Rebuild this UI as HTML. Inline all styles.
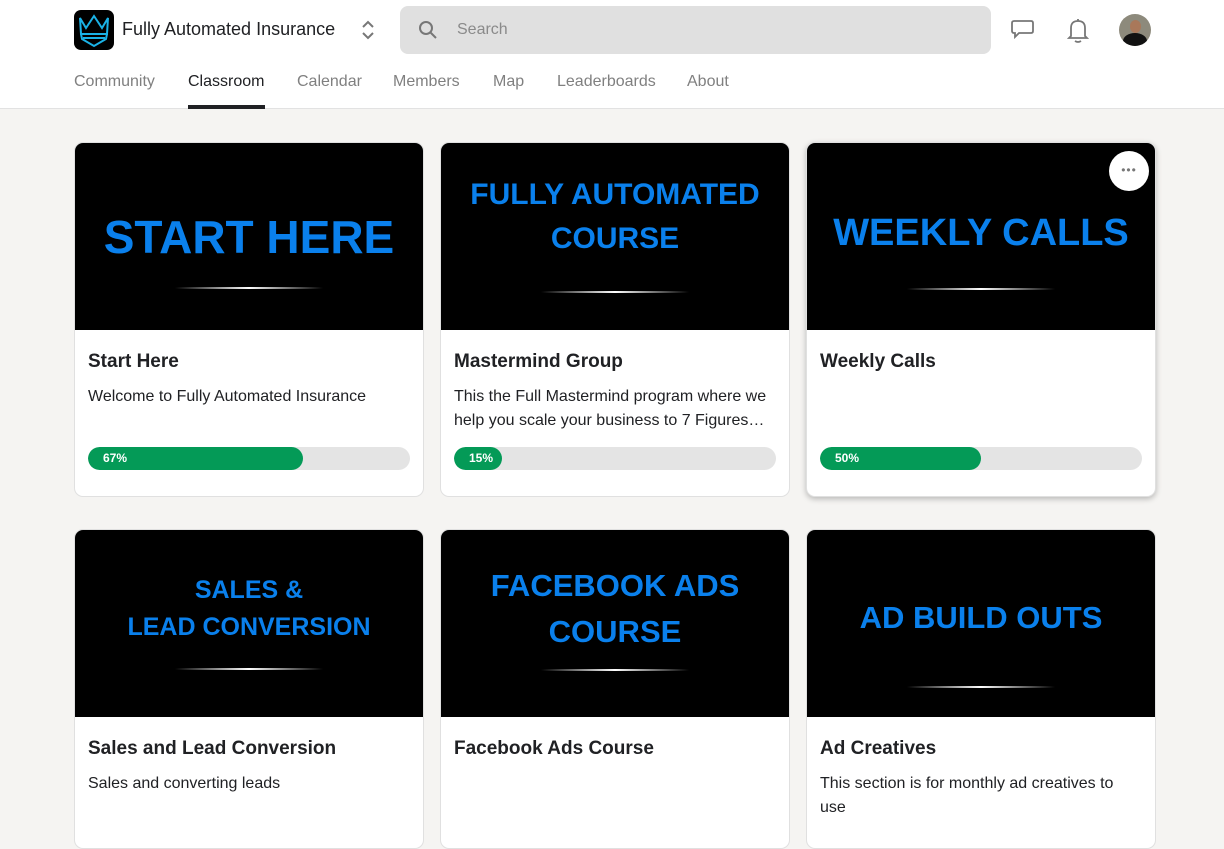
<!DOCTYPE html>
<html><head><meta charset="utf-8"><style>
*{box-sizing:border-box;margin:0;padding:0}
body{width:1224px;height:833px;overflow:hidden;background:#f5f4f2;font-family:"Liberation Sans",sans-serif;color:#202124;position:relative}
.hdr{position:absolute;left:0;top:0;width:1224px;height:109px;background:#fff;border-bottom:1px solid #e2e2e2}
.logo{position:absolute;left:74px;top:10px;width:40px;height:40px;background:#000;border-radius:7px}
.title{position:absolute;left:122px;top:19px;font-size:18px;color:#202124}
.chev{position:absolute;left:360px;top:19px}
.search{position:absolute;left:400px;top:6px;width:591px;height:48px;background:#e0e0e0;border-radius:8px}
.search span{position:absolute;left:57px;top:15px;font-size:16px;color:#8a8a8a}
.nav{position:absolute;top:72px;font-size:16px;color:#808080}
.nav.act{color:#202124}
.uline{position:absolute;left:188px;top:105px;width:77px;height:4px;background:#202124}
.card{position:absolute;width:350px;background:#fff;border:1px solid #e0e0e0;border-radius:9px;overflow:hidden}
.img{height:187px;background:#000;position:relative;color:#0a80ec;text-align:center;font-weight:bold;line-height:44px}
.img .ln{position:absolute;left:100px;width:148px;height:2px;background:linear-gradient(90deg,transparent,#fff,transparent)}
.card h3{position:absolute;left:13px;top:208px;font-size:19px;font-weight:bold}
.card p{position:absolute;left:13px;top:242px;width:305px;font-size:16px;line-height:24px;color:#202124}
.bar{position:absolute;left:13px;top:304px;width:322px;height:23px;border-radius:12px;background:#e4e4e4;overflow:hidden}
.bar div{height:100%;background:#049a57;border-radius:12px;color:#fff;font-size:12px;font-weight:bold;padding-left:15px;line-height:23px}
</style></head><body>
<div class="hdr">
<div class="logo"><svg width="40" height="40" viewBox="0 0 40 40"><g fill="none" stroke="#1ab2e6" stroke-width="2"><path d="M6 8 L12 18 L20 6 L28 18 L34 8 L33 24 L7 24 Z"/><path d="M7 24 L8 29 L20 36 L32 29 L33 24"/><path d="M9 28 H31"/></g></svg></div>
<div class="title">Fully Automated Insurance</div>
<svg class="chev" width="16" height="22" viewBox="0 0 16 22"><path d="M3 8 L8 3 L13 8 M3 14 L8 19 L13 14" fill="none" stroke="#777" stroke-width="2"/></svg>
<div class="search"><svg style="position:absolute;left:18px;top:14px" width="20" height="20" viewBox="0 0 20 20"><circle cx="8" cy="8" r="6" fill="none" stroke="#777" stroke-width="2"/><path d="M12.5 12.5 L18 18" stroke="#777" stroke-width="2"/></svg><span>Search</span></div>
<svg style="position:absolute;left:1010px;top:19px" width="25" height="22" viewBox="0 0 25 22"><path d="M4 2 H21 Q23 2 23 4 V12 Q23 14 21 14 H9 L5 18 V14 H4 Q2 14 2 12 V4 Q2 2 4 2 Z" fill="none" stroke="#777" stroke-width="1.8"/></svg>
<svg style="position:absolute;left:1067px;top:16px" width="22" height="28" viewBox="0 0 22 28"><path d="M11 3 V5 M4 20 V12 Q4 5 11 5 Q18 5 18 12 V20 L20 22 H2 Z M8 25 Q11 27 14 25" fill="none" stroke="#777" stroke-width="1.8"/></svg>
<div style="position:absolute;left:1119px;top:14px;width:32px;height:32px;border-radius:50%;overflow:hidden;background:#8d8a7c"><div style="position:absolute;left:11px;top:6px;width:11px;height:13px;border-radius:50%;background:#a9785a"></div><div style="position:absolute;left:4px;top:19px;width:24px;height:16px;border-radius:50% 50% 0 0;background:#111"></div></div>
<div class="nav" style="left:74px;top:73px">Community</div>
<div class="nav act" style="left:188px;top:73px">Classroom</div>
<div class="nav" style="left:297px;top:73px">Calendar</div>
<div class="nav" style="left:393px;top:73px">Members</div>
<div class="nav" style="left:493px;top:73px">Map</div>
<div class="nav" style="left:557px;top:73px">Leaderboards</div>
<div class="nav" style="left:687px;top:73px">About</div>
<div class="uline"></div>
</div>

<div class="card" style="left:74px;top:142px;height:355px"><div class="img"><div style="position:absolute;top:72px;width:100%;font-size:46px">START HERE</div><div class="ln" style="top:144px"></div></div>
<h3>Start Here</h3><p>Welcome to Fully Automated Insurance</p><div class="bar"><div style="width:215px">67%</div></div></div>

<div class="card" style="left:440px;top:142px;height:355px"><div class="img"><div style="position:absolute;top:30px;width:100%;font-size:30px">FULLY AUTOMATED<br>COURSE</div><div class="ln" style="top:148px"></div></div>
<h3>Mastermind Group</h3><p style="width:320px">This the Full Mastermind program where we help you scale your business to 7 Figures…</p><div class="bar"><div style="width:48px">15%</div></div></div>

<div class="card" style="left:806px;top:142px;height:355px;box-shadow:0 2px 6px rgba(0,0,0,.25)"><div class="img"><div style="position:absolute;top:68px;width:100%;font-size:38px">WEEKLY CALLS</div><div class="ln" style="top:145px"></div>
<div style="position:absolute;left:302px;top:8px;width:40px;height:40px;border-radius:50%;background:#fff;color:#777;font-size:12px;font-weight:normal;line-height:38px;letter-spacing:1px">•••</div></div>
<h3>Weekly Calls</h3><div class="bar"><div style="width:161px">50%</div></div></div>

<div class="card" style="left:74px;top:529px;height:320px"><div class="img"><div style="position:absolute;top:42px;width:100%;font-size:25px;line-height:37px">SALES &amp;<br>LEAD CONVERSION</div><div class="ln" style="top:138px"></div></div>
<h3>Sales and Lead Conversion</h3><p>Sales and converting leads</p></div>

<div class="card" style="left:440px;top:529px;height:320px"><div class="img"><div style="position:absolute;top:33px;width:100%;font-size:31px;line-height:46px">FACEBOOK ADS<br>COURSE</div><div class="ln" style="top:139px"></div></div>
<h3>Facebook Ads Course</h3></div>

<div class="card" style="left:806px;top:529px;height:320px"><div class="img"><div style="position:absolute;top:66px;width:100%;font-size:31px">AD BUILD OUTS</div><div class="ln" style="top:156px"></div></div>
<h3>Ad Creatives</h3><p>This section is for monthly ad creatives to use</p></div>
</body></html>
